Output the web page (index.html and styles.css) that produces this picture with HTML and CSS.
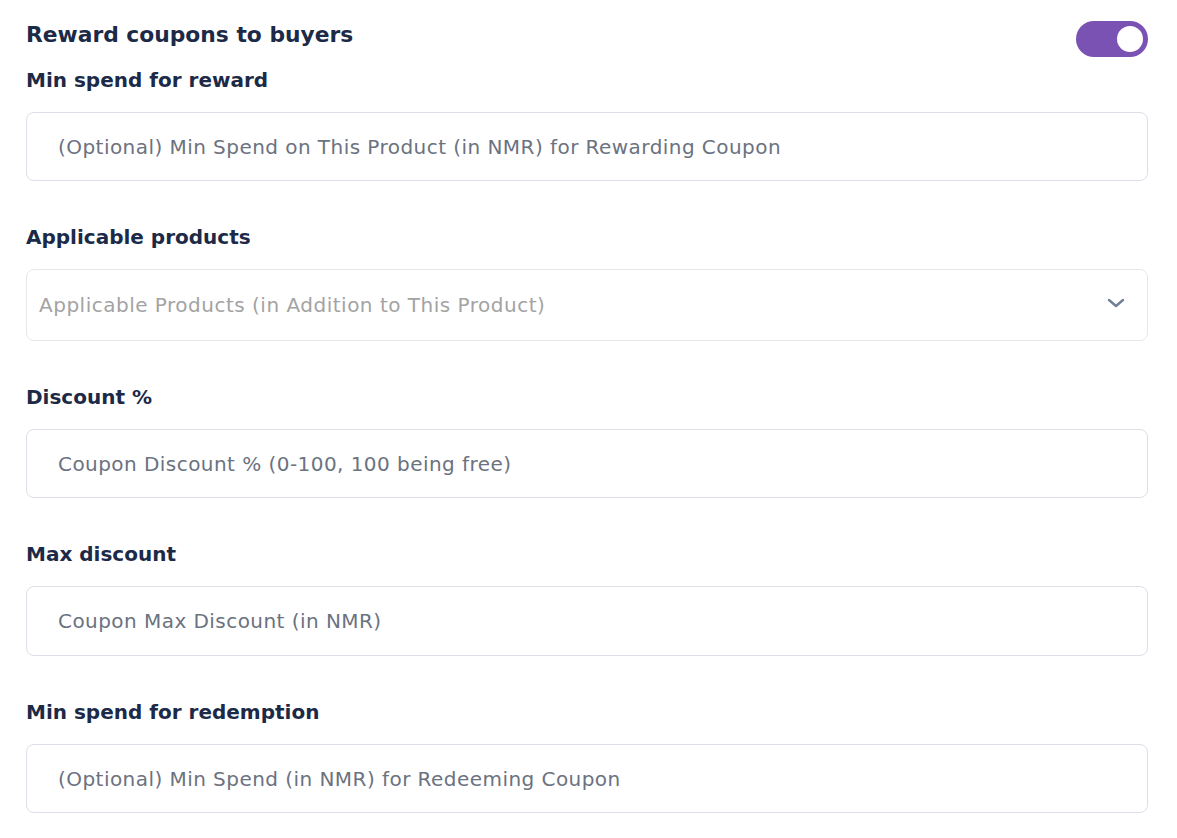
FILE: index.html
```html
<!DOCTYPE html>
<html lang="en">
<head>
<meta charset="utf-8">
<title>Reward coupons</title>
<link rel="stylesheet" href="styles.css">
</head>
<body>
<div class="form">
  <div class="header">
    <h2 class="title">Reward coupons to buyers</h2>
    <span class="toggle"><span class="knob"></span></span>
  </div>
  <div class="field first">
    <label class="label">Min spend for reward</label>
    <input class="input" type="text" placeholder="(Optional) Min Spend on This Product (in NMR) for Rewarding Coupon">
  </div>
  <div class="field">
    <label class="label">Applicable products</label>
    <div class="select">
      <span class="select-text">Applicable Products (in Addition to This Product)</span>
      <svg class="chevron" width="18" height="10" viewBox="0 0 18 10"><path d="M2 2 L9 8 L16 2" fill="none" stroke="#718096" stroke-width="2.4" stroke-linecap="round" stroke-linejoin="round"/></svg>
    </div>
  </div>
  <div class="field">
    <label class="label">Discount %</label>
    <input class="input" type="text" placeholder="Coupon Discount % (0-100, 100 being free)">
  </div>
  <div class="field">
    <label class="label">Max discount</label>
    <input class="input h70" type="text" placeholder="Coupon Max Discount (in NMR)">
  </div>
  <div class="field">
    <label class="label">Min spend for redemption</label>
    <input class="input" type="text" placeholder="(Optional) Min Spend (in NMR) for Redeeming Coupon">
  </div>
</div>
</body>
</html>
```
FILE: styles.css
```css
* { box-sizing: border-box; }
body {
  margin: 0;
  background: #ffffff;
  font-family: "DejaVu Sans", "Open Sans", sans-serif;
}
.form {
  width: 1122px;
  margin-left: 26px;
  padding-top: 18px;
}
.header {
  display: flex;
  justify-content: space-between;
  align-items: flex-start;
}
.title {
  margin: 0;
  font-size: 21.8px;
  line-height: 33px;
  font-weight: 700;
  color: #1c2a48;
}
.toggle {
  margin-top: 3px;
  width: 72px;
  height: 36px;
  border-radius: 18px;
  background: #7952b3;
  display: flex;
  align-items: center;
  justify-content: flex-end;
  padding-right: 5px;
}
.knob {
  width: 26px;
  height: 26px;
  border-radius: 50%;
  background: #ffffff;
}
.field {
  display: flex;
  flex-direction: column;
  margin-top: 40px;
}
.field.first { margin-top: 7px; }
.label {
  font-size: 20px;
  line-height: 32px;
  font-weight: 700;
  color: #1c2a48;
  margin-bottom: 16px;
}
.input {
  height: 69px;
  width: 100%;
  border: 1px solid #dcdfe8;
  border-radius: 8px;
  padding: 0 0 0 31px;
  font-family: inherit;
  font-size: 20px;
  letter-spacing: 0.45px;
  color: #333;
  background: #fff;
  outline: none;
}
.input.h70 { height: 70px; }
.input::placeholder { color: #6b7280; }
.select {
  height: 72px;
  border: 1px solid #e5e7eb;
  border-radius: 8px;
  display: flex;
  align-items: center;
  justify-content: space-between;
  padding: 0 22px 0 12px;
}
.select-text {
  font-size: 20px;
  letter-spacing: 0.5px;
  color: #a3a3a3;
}
.chevron { margin-top: -4px; }
```
